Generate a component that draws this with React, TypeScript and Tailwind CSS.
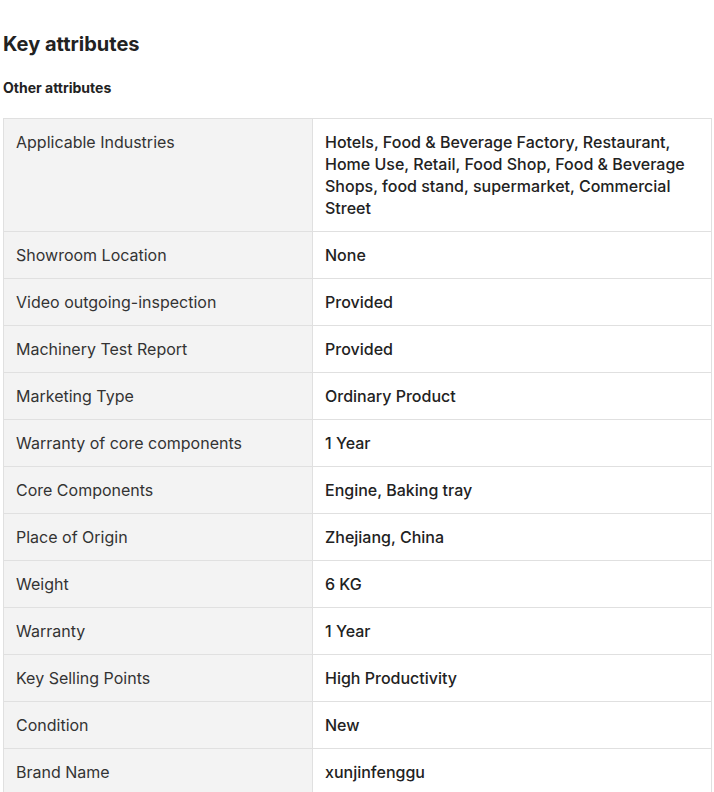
import React from "react";

const rows: [string, string][] = [
  ["Applicable Industries", "Hotels, Food & Beverage Factory, Restaurant, Home Use, Retail, Food Shop, Food & Beverage Shops, food stand, supermarket, Commercial Street"],
  ["Showroom Location", "None"],
  ["Video outgoing-inspection", "Provided"],
  ["Machinery Test Report", "Provided"],
  ["Marketing Type", "Ordinary Product"],
  ["Warranty of core components", "1 Year"],
  ["Core Components", "Engine, Baking tray"],
  ["Place of Origin", "Zhejiang, China"],
  ["Weight", "6 KG"],
  ["Warranty", "1 Year"],
  ["Key Selling Points", "High Productivity"],
  ["Condition", "New"],
  ["Brand Name", "xunjinfenggu"],
];

export default function App() {
  return (
    <div className="bg-white px-[3px] pt-[30px] text-[#222]" style={{ fontFamily: "Inter, 'Noto Sans', sans-serif" }}>
      <h2 className="text-[20px] font-bold leading-[28px]">Key attributes</h2>
      <h3 className="mt-[21px] text-[14px] font-bold leading-[18px]">Other attributes</h3>
      <table className="mt-[21px] w-[709px] table-fixed border-collapse text-[16px] leading-[22px]">
        <colgroup>
          <col className="w-[309px]" />
          <col />
        </colgroup>
        <tbody>
          {rows.map(([k, v]) => (
            <tr key={k}>
              <td className="border border-[#e0e0e0] bg-[#f3f3f3] px-3 py-3 align-top text-[#333]">{k}</td>
              <td className="border border-[#e0e0e0] px-3 py-3 align-top font-[450] text-[#222]">{v}</td>
            </tr>
          ))}
        </tbody>
      </table>
    </div>
  );
}
